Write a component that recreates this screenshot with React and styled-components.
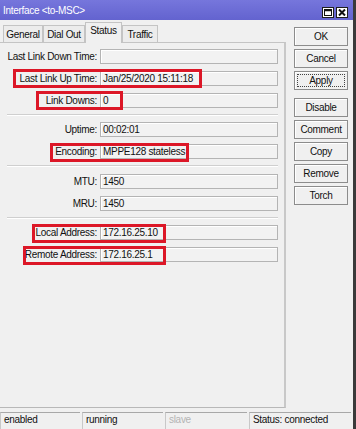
import React from 'react'
import styled, { createGlobalStyle } from 'styled-components'

const GlobalStyle = createGlobalStyle`
  html, body {
    margin: 0;
    padding: 0;
    background: #ffffff;
  }
  body {
    font-family: 'Liberation Sans', Arial, sans-serif;
    font-size: 10px;
    color: #111;
  }
  * {
    box-sizing: border-box;
  }
`

const Window = styled.div`
  width: 356px;
  height: 429px;
  display: flex;
  flex-direction: column;
  background: #f0f0f0;
  border-right: 3px solid #3a3a3a;
  overflow: hidden;
  font-size: 10px;
  letter-spacing: -0.3px;
`

const TitleBar = styled.div`
  height: 20px;
  flex: none;
  display: flex;
  align-items: center;
  justify-content: space-between;
  padding: 0 5px 0 3px;
  background: linear-gradient(#7676dc, #6363cf);
  color: #ffffff;
`

const TitleButtons = styled.div`
  display: flex;
  gap: 2px;
  margin-top: 4px;
`

const TitleButton = styled.div`
  width: 12px;
  height: 11px;
  background: #ffffff;
  border: 1px solid #1e1e1e;
  display: flex;
  align-items: center;
  justify-content: center;
  svg {
    display: block;
  }
`

const Body = styled.div`
  flex: 1;
  display: flex;
  min-height: 0;
`

const Main = styled.div`
  width: 286px;
  display: flex;
  flex-direction: column;
`

const TabStrip = styled.div`
  height: 22px;
  display: flex;
  align-items: flex-end;
  padding-left: 3px;
`

const Tab = styled.div`
  height: ${(p) => (p.active ? '21px' : '17px')};
  padding: ${(p) => (p.active ? '2px 0 0' : '3px 0 0')};
  width: ${(p) => p.w}px;
  text-align: center;
  background: ${(p) => (p.active ? '#f0f0f0' : '#ececec')};
  border: 1px solid #c4c4c4;
  border-bottom: none;
  margin-bottom: ${(p) => (p.active ? '-1px' : '0')};
  position: relative;
  z-index: ${(p) => (p.active ? 1 : 0)};
`

const Panel = styled.div`
  flex: 1;
  border-top: 1px solid #c4c4c4;
  border-right: 2px solid #c8c8c8;
  border-bottom: 1px solid #b8b8b8;
  padding-top: 2px;
`

const Row = styled.div`
  height: 22px;
  display: flex;
  align-items: center;
  position: relative;
`

const Label = styled.div`
  width: 100px;
  padding-right: 3px;
  text-align: right;
  white-space: nowrap;
`

const Field = styled.div`
  width: 178px;
  height: 15px;
  border: 1px solid #b4b4b4;
  background: #f2f2f2;
  box-shadow: inset 1px 1px 0 #ffffff;
  padding: 0 2px;
  line-height: 13px;
  white-space: nowrap;
`

const Highlight = styled.div`
  position: absolute;
  top: 2px;
  height: 19px;
  left: ${(p) => p.left}px;
  width: ${(p) => p.width}px;
  border: 3px solid #dc1727;
  pointer-events: none;
`

const Divider = styled.div`
  height: 7.5px;
  display: flex;
  align-items: center;
  padding: 0 6px 0 7px;
  &::before {
    content: '';
    flex: 1;
    border-top: 1px solid #cfcfcf;
    border-bottom: 1px solid #ffffff;
  }
`

const ButtonColumn = styled.div`
  flex: 1;
  display: flex;
  flex-direction: column;
  gap: 3px;
  padding: 7px 0 0 8px;
`

const Button = styled.div`
  width: 54px;
  height: 19px;
  border: 1px solid #8c8c8c;
  background: #f0f0f0;
  box-shadow: inset 1px 1px 0 #ffffff;
  display: flex;
  align-items: center;
  justify-content: center;
  margin-top: ${(p) => (p.spaced ? '5px' : '0')};
  outline: ${(p) => (p.focused ? '1px dotted #444' : 'none')};
  outline-offset: -4px;
`

const StatusBar = styled.div`
  height: 21px;
  flex: none;
  display: flex;
  gap: 2px;
  padding-top: 4px;
`

const StatusCell = styled.div`
  width: ${(p) => p.w}px;
  border-top: 1px solid #a8a8a8;
  border-left: 1px solid #c8c8c8;
  padding: 1px 0 0 3px;
  color: ${(p) => (p.muted ? '#b4b4b4' : '#111')};
  white-space: nowrap;
`

const groups = [
  [
    { label: 'Last Link Down Time:', value: '' },
    { label: 'Last Link Up Time:', value: 'Jan/25/2020 15:11:18', mark: [13, 189] },
    { label: 'Link Downs:', value: '0', mark: [36, 87] },
  ],
  [
    { label: 'Uptime:', value: '00:02:01' },
    { label: 'Encoding:', value: 'MPPE128 stateless', mark: [50, 139] },
  ],
  [
    { label: 'MTU:', value: '1450' },
    { label: 'MRU:', value: '1450' },
  ],
  [
    { label: 'Local Address:', value: '172.16.25.10', mark: [32, 134] },
    { label: 'Remote Address:', value: '172.16.25.1', mark: [23, 143] },
  ],
]

const tabs = [
  { name: 'General', w: 40 },
  { name: 'Dial Out', w: 42 },
  { name: 'Status', w: 37, active: true },
  { name: 'Traffic', w: 36 },
]

export default function App() {
  return (
    <>
      <GlobalStyle />
      <Window>
        <TitleBar>
          <span>Interface &lt;to-MSC&gt;</span>
          <TitleButtons>
            <TitleButton>
              <svg width="8" height="7" viewBox="0 0 8 7">
                <rect x="0.5" y="0.5" width="7" height="6" fill="none" stroke="#111" />
                <line x1="0" y1="1.5" x2="8" y2="1.5" stroke="#111" strokeWidth="1.5" />
              </svg>
            </TitleButton>
            <TitleButton>
              <svg width="8" height="7" viewBox="0 0 8 7">
                <path d="M1 0.5 L7 6.5 M7 0.5 L1 6.5" stroke="#111" strokeWidth="2" />
              </svg>
            </TitleButton>
          </TitleButtons>
        </TitleBar>
        <Body>
          <Main>
            <TabStrip>
              {tabs.map((t) => (
                <Tab key={t.name} w={t.w} active={t.active}>
                  {t.name}
                </Tab>
              ))}
            </TabStrip>
            <Panel>
              {groups.map((group, gi) => (
                <React.Fragment key={gi}>
                  {gi > 0 && <Divider />}
                  {group.map((row) => (
                    <Row key={row.label}>
                      <Label>{row.label}</Label>
                      <Field>{row.value}</Field>
                      {row.mark && <Highlight left={row.mark[0]} width={row.mark[1]} />}
                    </Row>
                  ))}
                </React.Fragment>
              ))}
            </Panel>
          </Main>
          <ButtonColumn>
            <Button>OK</Button>
            <Button>Cancel</Button>
            <Button focused>Apply</Button>
            <Button spaced>Disable</Button>
            <Button>Comment</Button>
            <Button>Copy</Button>
            <Button>Remove</Button>
            <Button>Torch</Button>
          </ButtonColumn>
        </Body>
        <StatusBar>
          <StatusCell w={80}>enabled</StatusCell>
          <StatusCell w={81}>running</StatusCell>
          <StatusCell w={82} muted>
            slave
          </StatusCell>
          <StatusCell w={102}>Status: connected</StatusCell>
        </StatusBar>
      </Window>
    </>
  )
}
